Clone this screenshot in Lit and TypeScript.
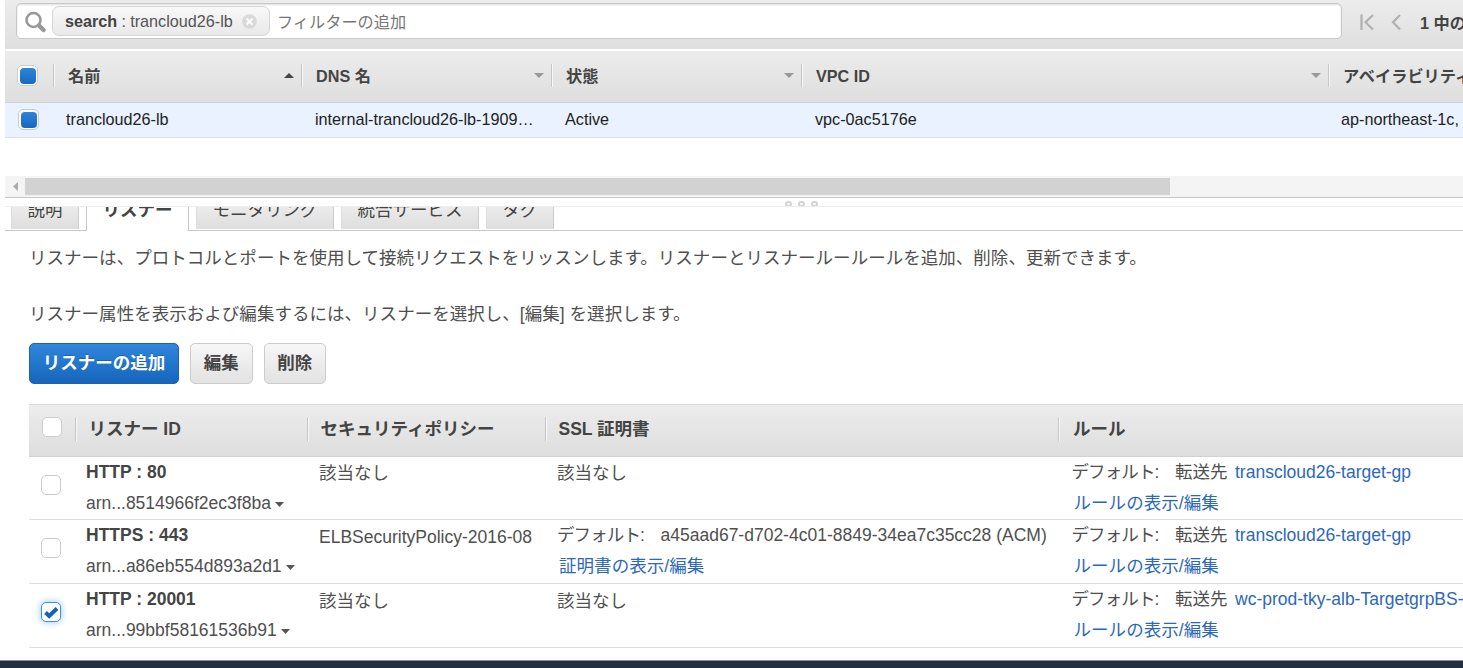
import { LitElement, html, css, svg } from "lit";
import { customElement } from "lit/decorators.js";
import { classMap } from "lit/directives/class-map.js";

interface Listener {
  name: string;
  arn: string;
  policy: string;
  certificate?: string;
  target: string;
  checked: boolean;
}

const LISTENERS: Listener[] = [
  { name: "HTTP : 80", arn: "arn...8514966f2ec3f8ba", policy: "該当なし", target: "transcloud26-target-gp", checked: false },
  {
    name: "HTTPS : 443",
    arn: "arn...a86eb554d893a2d1",
    policy: "ELBSecurityPolicy-2016-08",
    certificate: "a45aad67-d702-4c01-8849-34ea7c35cc28 (ACM)",
    target: "transcloud26-target-gp",
    checked: false,
  },
  { name: "HTTP : 20001", arn: "arn...99bbf58161536b91", policy: "該当なし", target: "wc-prod-tky-alb-TargetgrpBS-", checked: true },
];

const TABS = ["説明", "リスナー", "モニタリング", "統合サービス", "タグ"];

const sharedFont = css`
  :host {
    display: block;
    font-family: "Liberation Sans", "Noto Sans CJK JP", sans-serif;
    color: #444;
    white-space: nowrap;
  }
  * {
    box-sizing: border-box;
  }
`;

@customElement("search-bar")
export class SearchBar extends LitElement {
  static styles = [
    sharedFont,
    css`
      .bar {
        height: 49px;
        padding: 3px 0 0 11px;
        display: flex;
        background: linear-gradient(#ececec, #dfdfdf);
        font-size: 16.2px;
        overflow: hidden;
      }
      .field {
        flex: none;
        width: 1326px;
        height: 36px;
        border: 1px solid #c9c9c9;
        border-radius: 5px;
        background: #fff;
        box-shadow: inset 0 1px 2px #0002;
        display: flex;
        align-items: center;
        padding-left: 8px;
      }
      .glass {
        width: 22px;
        height: 24px;
        margin-right: 5px;
      }
      .chip {
        width: 218px;
        height: 30px;
        border: 1px solid #d5d5d5;
        border-radius: 7px;
        background: linear-gradient(#f8f8f8, #e9e9e9);
        display: flex;
        align-items: center;
        padding-left: 12px;
        line-height: 28px;
        color: #555;
      }
      .chip b {
        color: #444;
      }
      .sep {
        width: 13px;
        text-align: center;
      }
      .close {
        width: 15px;
        height: 15px;
        margin-left: 9px;
      }
      .hint {
        margin-left: 7px;
        color: #777;
      }
      .pager {
        display: flex;
        padding-top: 3px;
        height: 35px;
        align-items: center;
        margin-left: 16px;
        font-weight: bold;
      }
      .arrows {
        width: 44px;
        height: 18px;
        margin-right: 18px;
      }
    `,
  ];

  render() {
    return html`<div class="bar">
      <div class="field">
        <svg class="glass" viewBox="0 0 22 24" fill="none" stroke="#999">
          <circle cx="8.5" cy="11" r="7" stroke-width="2.6" />
          <path d="M14 16.500L18.500 21" stroke-width="4.5" stroke-linecap="round" />
        </svg>
        <div class="chip">
          <b>search</b><span class="sep">:</span><span>trancloud26-lb</span>
          <svg class="close" viewBox="0 0 15 15">
            <circle cx="7.5" cy="7.5" r="7.3" fill="#d9d9d9" />
            <path d="M4.5 4.5L10.5 10.5M10.5 4.5L4.5 10.5" stroke="#fff" stroke-width="2" />
          </svg>
        </div>
        <span class="hint">フィルターの追加</span>
      </div>
      <div class="pager">
        <svg class="arrows" viewBox="0 0 44 18" fill="none" stroke="#b2b2b2" stroke-width="2.3">
          <path d="M3.500 1.500V17M15 2L7.500 9.200L15 16.500M42 2L35 9.200L42 16.500" />
        </svg>
        <span>1 中の</span>
      </div>
    </div>`;
  }
}

@customElement("balancer-grid")
export class BalancerGrid extends LitElement {
  static styles = [
    sharedFont,
    css`
      .line {
        display: grid;
        grid-template-columns: 48px 248px 250px 250px 527px 250px;
        overflow: hidden;
        font-size: 16.2px;
      }
      .head {
        height: 52px;
        margin-top: 2px;
        background: linear-gradient(#ececec, #dedede);
        border-bottom: 1px solid #cfd4da;
        font-weight: bold;
        padding-top: 13px;
      }
      .cell {
        height: 23px;
        line-height: 24px;
        display: flex;
        align-items: center;
        justify-content: space-between;
        padding: 0 7px 0 14px;
        border-left: 1px solid #c6c6c6;
        box-shadow: inset 1px 0 #f7f7f7;
      }
      .row {
        height: 35px;
        background: #e9f2fe;
        border-bottom: 1px solid #dde2e8;
        color: #222;
        line-height: 32px;
      }
      .row span {
        padding-left: 14px;
      }
      .row .tick + span,
      .row span:last-child {
        padding-left: 13px;
      }
      .tick {
        width: 21px;
        height: 21px;
        margin: 1px 0 0 12px;
        border: 1px solid #c5ccd4;
        border-radius: 5px;
        background: #fff;
        padding: 2px;
      }
      .row .tick {
        margin-top: 6px;
        margin-left: 13px;
      }
      .fill {
        width: 16px;
        height: 16px;
        border-radius: 4px;
        background: linear-gradient(#2d84da, #1868bd);
      }
      .sort {
        width: 10px;
        height: 5px;
      }
      .scroll {
        margin-top: 38px;
        height: 22px;
        display: flex;
        align-items: center;
        background: #f4f4f4;
        border-bottom: 1px solid #c8c8c8;
      }
      .left {
        width: 20px;
        height: 10px;
      }
      .thumb {
        width: 1145px;
        height: 17px;
        background: #d2d2d2;
      }
    `,
  ];

  private column(label: string, sorted = false) {
    const d = sorted ? "M0 5L5 0L10 5Z" : "M0 0H10L5 5Z";
    return html`<div class="cell">
      <span>${label}</span>
      <svg class="sort" viewBox="0 0 10 5">${svg`<path d=${d} fill=${sorted ? "#444" : "#999"} />`}</svg>
    </div>`;
  }

  render() {
    return html`
      <div class="line head">
        <div class="tick"><div class="fill"></div></div>
        ${this.column("名前", true)}${this.column("DNS 名")}${this.column("状態")}${this.column("VPC ID")}${this.column("アベイラビリティー")}
      </div>
      <div class="line row">
        <div class="tick"><div class="fill"></div></div>
        <span>trancloud26-lb</span><span>internal-trancloud26-lb-1909…</span><span>Active</span><span>vpc-0ac5176e</span
        ><span>ap-northeast-1c,</span>
      </div>
      <div class="scroll">
        <svg class="left" viewBox="0 0 20 10"><path d="M13 0V9L8 4.500Z" fill="#aaa" /></svg>
        <div class="thumb"></div>
      </div>
    `;
  }
}

@customElement("detail-tabs")
export class DetailTabs extends LitElement {
  static styles = [
    sharedFont,
    css`
      .grip {
        height: 9px;
        display: flex;
        justify-content: center;
        align-items: flex-end;
        gap: 6px;
        padding-left: 134px;
        overflow: hidden;
        border-bottom: 1px solid #eee;
      }
      .dot {
        flex: none;
        width: 7px;
        height: 6px;
        margin-bottom: -1px;
        border: 2px solid #d3d3d3;
        border-radius: 50%;
      }
      .tabs {
        height: 24px;
        padding-left: 6px;
        display: flex;
        gap: 7px;
        border-bottom: 1px solid #c8c8c8;
        font-size: 17.5px;
      }
      .clip {
        height: 23px;
        overflow: hidden;
      }
      .tab {
        height: 35px;
        margin-top: -13px;
        line-height: 33px;
        padding: 0 15.500px;
        border-right: 1px solid #ccc;
        border-left: 1px solid #ddd;
        background: linear-gradient(#f3f3f3, #dedede);
      }
      .active {
        height: 24px;
      }
      .active .tab {
        height: 38px;
        background: #fff;
        border-color: #c8c8c8;
        font-weight: bold;
      }
    `,
  ];

  render() {
    return html`
      <div class="grip"><i class="dot"></i><i class="dot"></i><i class="dot"></i></div>
      <div class="tabs">
        ${TABS.map(
          (label, i) => html`<div class=${classMap({ clip: true, active: i === 1 })}><div class="tab">${label}</div></div>`
        )}
      </div>
    `;
  }
}

@customElement("listener-table")
export class ListenerTable extends LitElement {
  static styles = [
    sharedFont,
    css`
      .line {
        display: grid;
        grid-template-columns: 46px 232px 238px 513px 500px;
        font-size: 17.5px;
        overflow: hidden;
      }
      .head {
        height: 53px;
        padding-top: 12px;
        border-top: 1px solid #dadada;
        border-bottom: 1px solid #d2d2d2;
        background: linear-gradient(#ececec, #dedede);
        font-weight: bold;
        line-height: 24px;
      }
      .title {
        height: 24px;
        padding-left: 12.500px;
        border-left: 1px solid #c6c6c6;
        box-shadow: inset 1px 0 #f7f7f7;
      }
      .title:last-child {
        padding-left: 14px;
      }
      .row {
        height: 64px;
        border-bottom: 1px solid #dcdcdc;
        line-height: 31px;
        color: #4f4f4f;
      }
      .row:first-child {
        height: 63px;
      }
      .row > .cell {
        padding-left: 12px;
      }
      .row > .id {
        padding-left: 11px;
      }
      .row > .rules {
        padding-left: 13.500px;
      }
      .row > .low {
        padding-top: 2px;
      }
      .row:first-child > .low {
        padding-top: 1px;
      }
      .box {
        width: 20px;
        height: 20px;
        margin: 18px 0 0 12px;
        border: 1px solid #ccc;
        border-radius: 5px;
        background: #fff;
      }
      .head .box {
        margin: 0 0 0 13px;
      }
      .on {
        border-color: #3f8fdc;
        box-shadow: 0 0 7px #8fc1f5;
      }
      .mark {
        display: block;
        width: 18px;
        height: 18px;
      }
      .name {
        color: #444;
      }
      .caret {
        width: 9px;
        height: 5px;
        margin-left: 4px;
        vertical-align: 2px;
      }
      .default {
        display: inline-block;
        width: 103.500px;
        letter-spacing: -0.9px;
      }
      .to {
        display: inline-block;
        width: 60px;
      }
      .link {
        color: #2d68b8;
      }
      .indent {
        padding-left: 2px;
        letter-spacing: 0.05px;
      }
    `,
  ];

  private row(l: Listener) {
    return html`<div class="line row">
      <div class=${classMap({ box: true, on: l.checked })}>
        ${l.checked
          ? html`<svg class="mark" viewBox="0 0 18 18"><path d="M3.500 9.500L7.200 13L15 5.500" fill="none" stroke="#1663b5" stroke-width="4" /></svg>`
          : ""}
      </div>
      <div class="cell id">
        <b class="name">${l.name}</b>
        <div>${l.arn}<svg class="caret" viewBox="0 0 9 5"><path d="M0 0H9L4.500 5Z" fill="#555" /></svg></div>
      </div>
      <div class="cell low">${l.policy}</div>
      ${l.certificate
        ? html`<div class="cell">
            <div><span class="default">デフォルト:</span>${l.certificate}</div>
            <div class="link indent">証明書の表示/編集</div>
          </div>`
        : html`<div class="cell low">該当なし</div>`}
      <div class="cell rules">
        <div><span class="default">デフォルト:</span><span class="to">転送先</span><span class="link">${l.target}</span></div>
        <div class="link indent">ルールの表示/編集</div>
      </div>
    </div>`;
  }

  render() {
    return html`
      <div class="line head">
        <div class="box"></div>
        <div class="title">リスナー ID</div>
        <div class="title">セキュリティポリシー</div>
        <div class="title">SSL 証明書</div>
        <div class="title">ルール</div>
      </div>
      <div>${LISTENERS.map((l) => this.row(l))}</div>
    `;
  }
}

@customElement("app-root")
export class AppRoot extends LitElement {
  static styles = [
    sharedFont,
    css`
      .page {
        height: 668px;
        background: #fff;
        overflow: hidden;
        display: flex;
        flex-direction: column;
      }
      .top {
        margin-left: 5px;
      }
      .panel {
        padding-left: 29px;
        flex: 1;
        font-size: 17.5px;
      }
      .text {
        margin: 0;
        line-height: 28px;
        letter-spacing: 0.03px;
        color: #4f4f4f;
      }
      .first {
        margin: 13px 0 28px;
      }
      .buttons {
        display: flex;
        gap: 11px;
        margin: 15px 0 20px;
      }
      .button {
        height: 41px;
        width: 62.500px;
        border: 1px solid #ccc;
        border-radius: 5px;
        background: linear-gradient(#f7f7f7, #e2e2e2);
        font: inherit;
        font-weight: bold;
        color: #444;
        padding: 0 0 4px;
      }
      .primary {
        width: 150px;
        color: #fff;
        border-color: #1c62b0;
        background: linear-gradient(#2f86dc, #1666bb);
        text-shadow: 0 -1px #0003;
      }
      .footer {
        height: 8px;
        background: #232f3e;
        border-top: 1px solid #8b929a;
      }
    `,
  ];

  render() {
    return html`<div class="page">
      <div class="top">
        <search-bar></search-bar>
        <balancer-grid></balancer-grid>
        <detail-tabs></detail-tabs>
      </div>
      <div class="panel">
        <p class="text first">
          リスナーは、プロトコルとポートを使用して接続リクエストをリッスンします。リスナーとリスナールールールを追加、削除、更新できます。
        </p>
        <p class="text">リスナー属性を表示および編集するには、リスナーを選択し、[編集] を選択します。</p>
        <div class="buttons">
          <button class="button primary">リスナーの追加</button>
          <button class="button">編集</button>
          <button class="button">削除</button>
        </div>
        <listener-table></listener-table>
      </div>
      <div class="footer"></div>
    </div>`;
  }
}
